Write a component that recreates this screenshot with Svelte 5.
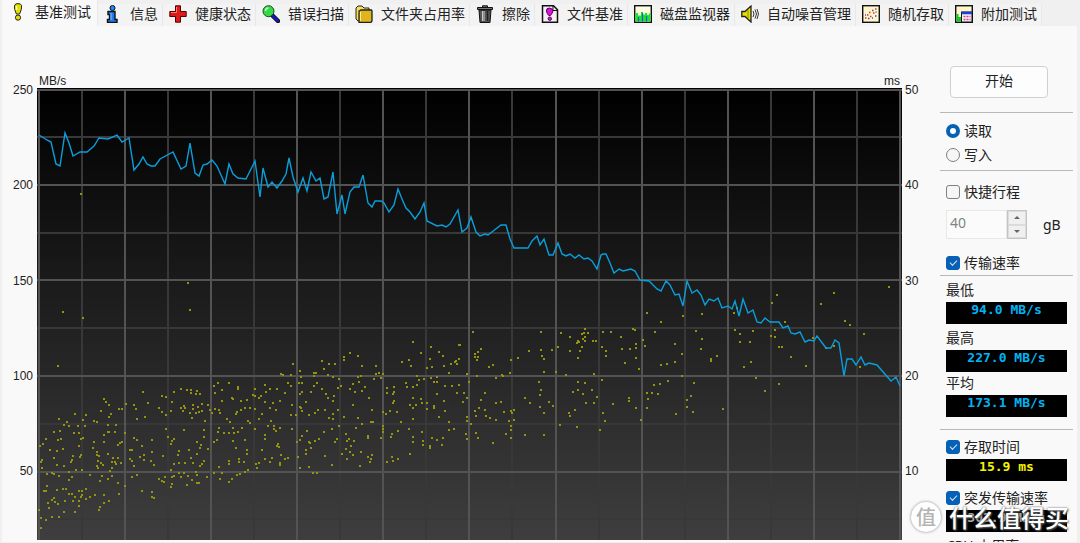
<script lang="ts">
  const tabs = [
    { id: 'bench', label: '基准测试' },
    { id: 'info', label: '信息' },
    { id: 'health', label: '健康状态' },
    { id: 'scan', label: '错误扫描' },
    { id: 'folder', label: '文件夹占用率' },
    { id: 'erase', label: '擦除' },
    { id: 'file', label: '文件基准' },
    { id: 'monitor', label: '磁盘监视器' },
    { id: 'aam', label: '自动噪音管理' },
    { id: 'random', label: '随机存取' },
    { id: 'extra', label: '附加测试' }
  ];

  const speedTicks = [250, 200, 150, 100, 50];
  const timeTicks = [50, 40, 30, 20, 10];
  const majorX = [39, 125, 211, 297, 383, 469, 556, 642, 728, 814, 900];
  const minorX = [82, 168, 254, 340, 426, 512, 599, 685, 771, 857];
  const majorY = [90, 185, 280, 376, 472];
  const minorY = [137, 233, 328, 424, 519];

  // transfer rate curve
  const speedLine =
    '39,135 47,140 51,142 56,164 60,166 65,133 69,143 73,156 80,152 87,152 94,146 99,138 108,139 117,135 122,142 129,138 134,170 139,164 143,157 147,164 151,166 155,166 160,159 173,152 181,169 186,166 190,143 195,173 199,176 203,165 207,164 212,160 217,166 225,184 229,164 233,174 238,178 246,179 255,161 260,197 263,168 268,187 272,182 277,188 282,181 286,174 289,158 293,177 298,192 303,178 307,191 311,172 316,181 320,178 324,199 328,197 333,172 337,214 342,195 345,214 350,192 354,187 359,187 363,175 368,203 372,207 375,201 381,201 384,203 389,212 394,205 398,189 402,199 406,208 410,212 415,219 420,212 424,203 427,221 437,226 442,225 446,227 450,224 458,210 462,232 467,228 471,217 476,232 480,236 485,234 488,235 501,225 506,225 510,239 514,248 528,248 532,241 537,236 540,245 544,239 549,255 553,255 558,243 562,254 566,256 570,254 575,258 579,255 584,259 588,258 592,261 597,269 601,255 603,254 606,254 610,263 614,273 619,269 623,271 631,269 635,271 640,280 649,281 657,289 661,291 666,281 670,285 675,295 679,294 683,306 687,281 692,293 697,290 701,295 705,305 709,299 714,301 718,298 722,308 728,306 732,309 735,301 739,316 743,299 748,313 753,310 757,322 761,323 765,318 770,322 779,322 783,328 788,326 791,333 795,334 800,332 805,342 809,340 814,341 817,336 826,348 831,348 835,340 839,343 844,376 847,359 852,359 856,365 861,357 865,365 869,363 877,365 891,381 896,377 900,386';

  // access time samples
  const accessDots =
    '81,194 188,283 190,310 63,312 83,318 58,366 143,392 162,396 166,397 174,392 181,389 187,390 191,390 191,393 197,391 196,394 200,394 104,399 106,402 109,405 101,411 119,409 122,409 126,404 134,405 136,409 148,403 159,408 172,402 162,412 171,411 181,408 184,406 185,408 183,411 193,405 193,409 198,407 202,404 208,405 210,410 190,413 196,413 199,412 202,411 214,386 218,383 222,390 229,383 215,393 238,387 238,389 222,401 232,398 233,399 215,409 219,410 212,413 220,413 237,412 236,414 ' +
    '75,414 86,415 59,419 83,420 67,422 64,425 69,426 78,426 85,426 94,421 97,422 109,417 111,414 108,425 116,425 137,419 145,417 166,415 192,418 205,421 227,419 230,422 54,432 60,431 74,433 79,433 104,435 108,432 109,432 115,432 125,433 166,429 184,430 204,430 219,428 218,432 224,433 229,433 233,428 234,433 238,432 46,439 43,444 40,446 50,450 58,440 61,439 57,451 63,449 81,439 83,438 79,446 94,442 93,448 104,442 118,445 120,443 122,442 134,438 137,440 152,440 142,446 130,450 132,450 168,437 174,439 172,441 171,444 197,442 204,437 201,445 200,448 189,450 208,449 214,442 217,440 233,441 236,448 ' +
    '54,458 42,460 41,462 42,468 57,465 64,466 73,456 80,457 81,455 72,460 71,462 76,470 82,470 97,452 97,455 99,456 98,461 101,463 97,466 98,468 103,465 108,454 113,458 112,462 118,458 115,462 116,464 121,463 112,468 110,471 130,459 132,461 134,466 140,457 144,455 144,460 152,452 151,461 154,465 163,456 179,451 178,455 174,464 179,463 171,470 185,463 191,458 197,454 204,461 202,464 200,466 193,463 229,461 229,464 239,459 239,462 219,467 52,473 54,474 47,474 59,476 69,472 69,480 72,477 90,475 102,476 100,481 108,479 112,476 118,483 125,486 132,477 137,475 159,479 162,481 164,482 165,477 172,477 174,476 172,484 171,487 179,473 181,477 184,473 188,476 187,485 192,480 196,472 197,475 197,483 199,483 207,477 214,473 222,473 220,479 232,479 229,482 237,475 ' +
    '47,486 44,491 46,491 57,490 63,489 66,489 69,494 72,494 79,491 82,491 86,489 75,497 81,497 82,495 86,499 90,497 95,495 104,495 119,494 142,491 152,492 152,497 154,498 54,498 52,500 55,502 48,503 58,504 49,508 65,501 73,501 79,501 79,506 64,512 75,512 100,507 99,510 104,503 109,501 39,510 41,518 46,520 52,517 59,517 41,528 ' +
    '293,364 281,374 283,375 291,375 300,371 301,377 314,373 316,373 314,376 322,361 324,369 329,364 335,364 328,375 333,377 344,357 344,360 350,353 358,356 362,366 376,366 376,374 379,373 383,374 358,377 361,376 381,378 374,379 359,382 413,342 421,353 431,347 439,352 443,356 430,359 409,360 402,362 411,366 427,368 432,367 444,366 451,364 456,361 457,364 459,359 459,345 449,373 417,376 431,378 437,377 434,382 437,382 424,379 419,380 417,385 406,383 407,387 413,387 445,386 452,386 265,385 288,383 291,386 299,383 302,383 317,383 314,386 322,389 339,379 341,386 338,388 353,384 350,389 355,392 362,391 365,387 387,388 387,393 394,387 394,392 ' +
    '255,389 266,392 270,389 277,389 285,393 300,394 302,392 311,392 326,394 328,398 334,396 333,401 306,402 253,395 255,396 259,398 261,396 247,400 241,401 265,402 273,403 280,401 292,405 300,407 301,408 302,411 325,410 318,410 315,413 309,415 329,418 333,414 333,419 338,410 344,417 353,405 369,398 372,410 358,418 362,424 371,422 373,422 245,408 250,408 241,410 255,409 270,408 276,410 291,415 296,415 262,414 259,419 248,421 250,423 271,421 268,426 255,429 274,426 274,429 276,431 280,428 292,429 242,428 307,431 324,432 332,429 339,426 356,428 346,434 302,436 300,440 297,442 309,442 310,443 315,441 319,439 311,448 306,450 306,454 298,457 325,456 335,442 337,439 347,441 349,439 354,441 351,446 346,449 350,452 342,454 353,455 347,459 361,452 368,436 368,438 381,438 372,455 368,457 371,459 370,462 360,466 332,465 ' +
    '245,440 265,435 265,439 278,444 277,446 279,447 262,450 247,450 247,454 281,455 244,462 265,459 272,458 270,462 280,463 280,465 288,458 285,459 259,463 256,464 257,468 248,470 245,472 300,468 309,467 313,473 317,473 236,448 240,474 237,475 383,412 386,414 390,411 397,412 393,394 394,401 393,403 410,405 413,408 416,405 413,398 421,399 422,403 427,403 427,409 434,406 434,408 437,394 444,401 439,417 445,411 457,393 413,419 401,422 383,426 383,429 383,432 398,431 392,434 391,437 409,429 422,432 413,437 413,442 423,441 423,445 430,446 430,448 432,438 437,440 443,438 442,445 449,430 454,429 449,422 410,454 392,457 393,461 398,459 387,462 ' +
    '473,332 460,345 481,349 478,352 475,354 475,357 478,357 477,360 493,365 489,367 511,360 510,373 518,358 529,351 541,332 541,350 542,356 544,359 552,350 544,372 556,372 558,347 561,333 570,337 570,351 585,329 588,333 582,334 584,333 585,337 583,339 585,341 578,341 579,342 577,343 582,347 580,351 578,358 593,341 596,341 603,332 611,332 602,347 606,351 606,356 621,337 622,349 630,349 633,329 635,330 636,344 636,348 636,358 625,363 639,369 647,313 661,322 655,332 643,340 645,346 594,374 566,375 602,380 502,375 503,376 496,378 477,376 469,382 467,374 464,393 467,398 463,402 485,393 481,400 479,408 475,411 476,416 486,416 485,410 496,403 501,402 504,412 490,418 496,420 509,421 511,411 512,413 514,410 514,420 467,417 467,421 471,424 511,426 511,430 506,434 511,438 493,443 476,433 478,438 466,434 467,439 525,435 544,435 525,398 530,403 539,382 541,390 540,395 549,402 553,406 540,407 544,413 ' +
    '452,386 449,422 449,430 454,429 443,438 442,445 455,362 451,364 457,364 449,373 459,385 457,393 578,382 585,383 578,390 573,392 583,394 592,390 597,397 586,403 594,403 575,410 569,413 570,416 560,425 577,427 600,430 605,421 603,413 613,404 629,398 629,401 636,408 641,420 647,393 652,393 658,394 648,399 647,408 654,385 660,384 683,316 702,314 696,331 702,339 701,349 675,344 682,354 675,362 661,365 667,364 682,376 668,381 694,383 691,396 687,400 687,407 693,412 676,414 723,409 717,356 711,359 711,361 772,303 777,295 785,322 734,313 737,308 735,330 740,334 753,331 740,342 750,342 751,362 744,367 756,378 765,391 771,336 775,330 775,337 779,347 782,347 779,384 791,357 806,366 813,338 821,304 834,293 845,321 850,325 864,334 889,287 826,348 834,346 860,367';

  const dotPath = accessDots
    .split(' ')
    .map((p) => {
      const [x, y] = p.split(',').map(Number);
      return `M${x - 1} ${y - 1}h2v2h-2z`;
    })
    .join('');

  let active = $state('bench');
  let mode = $state('read');
  let shortStroke = $state(false);
  let capacity = $state(40);
  let showTransfer = $state(true);
  let showAccess = $state(true);
  let showBurst = $state(true);
</script>

{#snippet icon(id: string)}
  <svg class="icon" viewBox="0 0 18 18" aria-hidden="true">
    {#if id === 'bench'}
      <path d="M6 2Q6 .6 9 .6T12.600 2.500Q13 6 10.600 11H7.400Q5 6 5.400 3Z" fill="#e6e000" stroke="#222" />
      <path d="M7.500 3v4" stroke="#ffffa8" stroke-width="1.500" />
      <circle cx="9" cy="14.600" r="2.600" fill="#e6e000" stroke="#222" />
    {:else if id === 'info'}
      <circle cx="8.500" cy="3" r="2.500" fill="#1a8cff" stroke="#111" />
      <path d="M4 6.500h7v8h2v3H3.500v-3h2v-5H4Z" fill="#1a7cf0" stroke="#111" stroke-width="1.400" />
      <path d="M7 8v7" stroke="#7cc4ff" />
    {:else if id === 'health'}
      <path d="M6.500.8h5v5.700h5.700v5h-5.700v5.700h-5v-5.700H.8v-5h5.700Z" fill="#dc1c1c" stroke="#500" />
      <path d="M7.500 2v5.500H2" stroke="#ff7b6b" fill="none" />
    {:else if id === 'scan'}
      <path d="M10 10l6 6" stroke="#111" stroke-width="4.500" stroke-linecap="round" />
      <path d="M10.500 10.500l5.300 5.300" stroke="#1418c8" stroke-width="2.500" stroke-linecap="round" />
      <circle cx="6.500" cy="6.200" r="5.500" fill="#34d848" stroke="#164d1a" />
      <path d="M3.500 6q0-3 3-3" stroke="#c4ffc8" stroke-width="1.500" fill="none" />
    {:else if id === 'folder'}
      <path d="M1 3l2-2h4l2 2h5v11l-1 2H3l-2-2Z" fill="#f4e05a" stroke="#222" />
      <path d="M4 6l2-1h10.500l.5 1v10l-1 1.300H4Z" fill="#e0b41c" stroke="#222" stroke-width="1.300" />
      <path d="M5.500 7v9" stroke="#ffee88" />
    {:else if id === 'erase'}
      <path d="M6.500 2V.8h5V2M1.500 2.500h15v2h-15Z" fill="#777" stroke="#111" />
      <path d="M3 5h12l-1 12.500H4Z" fill="#555" stroke="#111" />
      <path d="M6.500 6v10M8 6v10" stroke="#c8c8c8" />
      <path d="M11.500 6v10" stroke="#222" stroke-width="1.500" />
    {:else if id === 'file'}
      <path d="M1.500.8h11l4 4v12.400h-15Z" fill="#f4f0f4" stroke="#111" stroke-width="1.500" />
      <path d="M12 1v4.500h4.500" fill="none" stroke="#111" />
      <path d="M8.500 3Q5 3 5.500 6t2.300 4.500h1.700Q11.500 8 12 6T8.500 3Z" fill="#e010e0" stroke="#505" />
      <circle cx="8.800" cy="13.700" r="1.700" fill="#e010e0" stroke="#505" />
    {:else if id === 'monitor'}
      <rect x=".7" y=".7" width="16.600" height="16.600" fill="#fdfde0" stroke="#111" stroke-width="1.400" />
      <path d="M1.500 16.500V8H4v2.500h3V7h2v2.500h2V8h2v2h2V8.500h1.500v8Z" fill="#18e828" />
      <path d="M4.500 16.500V12M8.500 16.500V8M12.500 16.500V11" stroke="#2458d8" stroke-width="1.300" />
    {:else if id === 'aam'}
      <path d="M.8 6.500H4L10 1v16l-6-5.500H.8Z" fill="#e6e000" stroke="#222" stroke-width="1.300" />
      <path d="M7 5v8" stroke="#888800" />
      <path d="M12 6q2 3 0 6M14 4.500q3 4.500 0 9M16 4q3 5 0 10" fill="none" stroke="#333" />
    {:else if id === 'random'}
      <rect x=".7" y=".7" width="16.600" height="16.600" fill="#fff6cc" stroke="#111" stroke-width="1.400" />
      <path d="M3 13h1.500M5 10h1.500M8 11.500h1.500M7 7.500h1.500M11 8h1.500M13 4h1.500" stroke="#e03030" stroke-width="1.500" />
      <path d="M3 10h1M6 13.500h1.500M10 13h1M10 5.500h1.500M13.500 7h1M13 11h1.500" stroke="#3050e0" stroke-width="1.500" />
    {:else}
      <rect x=".7" y=".7" width="16.600" height="16.600" fill="#fdf6c8" stroke="#111" stroke-width="1.400" />
      <path d="M1.500 16.500V9h2v3H6v4.500Z" fill="#10c820" />
      <rect x="6.500" y="7" width="10.500" height="10" fill="#f4f0ff" stroke="#111" />
      <path d="M6.500 8h10.500" stroke="#1840d8" stroke-width="2.500" />
      <path d="M8.500 11.500h7M8.500 14.500h7" stroke="#e04070" stroke-dasharray="2 1" stroke-width="1.500" />
    {/if}
  </svg>
{/snippet}

<div class="window">
  <nav class="tabs">
    {#each tabs as tab}
      <button type="button" class="tab" class:active={active === tab.id} onclick={() => (active = tab.id)}>
        {@render icon(tab.id)}
        <span>{tab.label}</span>
      </button>
    {/each}
  </nav>

  <main class="panel">
    <div class="axis left">
      {#each speedTicks as tick}
        <span>{tick}</span>
      {/each}
    </div>

    <section class="chart">
      <div class="units"><span>MB/s</span><span>ms</span></div>
      <svg class="plot" viewBox="37 88 865 452" preserveAspectRatio="none" role="img" aria-label="MB/s, ms">
        <defs>
          <linearGradient id="plot-bg" x1="0" y1="0" x2="0" y2="1">
            <stop offset="0" stop-color="#000" />
            <stop offset="1" stop-color="#3e3e3e" />
          </linearGradient>
        </defs>
        <rect x="37" y="88" width="865" height="452" fill="url(#plot-bg)" />
        <g class="minor">
          {#each minorX as x}<line x1={x} x2={x} y1="90" y2="540" />{/each}
          {#each minorY as y}<line x1="37" x2="902" y1={y} y2={y} />{/each}
        </g>
        <g class="major">
          {#each majorX as x}<line x1={x} x2={x} y1="90" y2="540" />{/each}
          {#each majorY as y}<line x1="37" x2="902" y1={y} y2={y} />{/each}
        </g>
        {#if showAccess}<path class="dots" d={dotPath} />{/if}
        {#if showTransfer}<polyline class="speed" points={speedLine} />{/if}
      </svg>
    </section>

    <div class="axis right">
      {#each timeTicks as tick}
        <span>{tick}</span>
      {/each}
    </div>

    <aside class="side">
      <button type="button" class="start">开始</button>

      <div class="group modes">
        <label><input type="radio" name="mode" value="read" bind:group={mode} />读取</label>
        <label><input type="radio" name="mode" value="write" bind:group={mode} />写入</label>
      </div>

      <div class="group stroke">
        <label><input type="checkbox" bind:checked={shortStroke} />快捷行程</label>
        <div class="capacity">
          <div class="spin">
            <input id="capacity" type="text" bind:value={capacity} disabled={!shortStroke} />
            <div class="arrows">
              <button type="button" aria-label="+" onclick={() => capacity++}><i class="up"></i></button>
              <button type="button" aria-label="-" onclick={() => capacity--}><i class="down"></i></button>
            </div>
          </div>
          <label for="capacity">gB</label>
        </div>
        <label><input type="checkbox" bind:checked={showTransfer} />传输速率</label>
      </div>

      <div class="group results">
        <span class="name">最低</span>
        <output class="lcd">94.0 MB/s</output>
        <span class="name">最高</span>
        <output class="lcd">227.0 MB/s</output>
        <span class="name last">平均</span>
        <output class="lcd">173.1 MB/s</output>
      </div>

      <div class="group timing">
        <label><input type="checkbox" bind:checked={showAccess} />存取时间</label>
        <output class="lcd yellow">15.9 ms</output>
        <label class="burst"><input type="checkbox" bind:checked={showBurst} />突发传输速率</label>
        <output class="lcd dim">303.9 MB/s</output>
        <span class="name cpu">CPU 占用率</span>
      </div>
    </aside>
  </main>

  <div class="watermark">
    <span class="badge">值</span>
    <span>什么值得买</span>
  </div>
</div>

<style>
  :global(body) {
    background: #f0f0f0;
  }

  .window {
    position: relative;
    display: flex;
    flex-direction: column;
    box-sizing: border-box;
    height: 100vh;
    padding: 0 3px 1px 2px;
    overflow: hidden;
    font-family: 'Noto Sans', 'Noto Sans CJK SC', sans-serif;
    font-size: 14px;
    color: #222;
  }

  button,
  input {
    font: inherit;
    color: inherit;
  }

  .tabs {
    display: flex;
    flex: none;
    height: 26px;
    align-items: flex-end;
  }

  .tab {
    display: flex;
    flex: none;
    align-items: center;
    gap: 8px;
    height: 22px;
    padding: 0 4px 2px 6px;
    border: 0;
    border-right: 1px solid #e8e8e8;
    background: #f3f3f3;
    line-height: 20px;
    white-space: nowrap;
  }

  .tab.active {
    align-self: flex-start;
    height: 26px;
    padding: 0 6px 2px 7px;
    background: #f9f9f9;
  }

  .icon {
    flex: none;
    width: 18px;
    height: 18px;
  }

  .panel {
    display: grid;
    grid-template-columns: 35px minmax(0, 1fr) 38px 133px;
    flex: 1;
    min-height: 0;
    padding-right: 4px;
    background: #f9f9f9;
  }

  .axis {
    display: grid;
    grid-template-rows: repeat(4, 211fr) 156fr;
    padding: 56px 4px 8px 3px;
    font: 12px/16px 'Liberation Sans', sans-serif;
  }

  .left {
    text-align: right;
  }

  .chart {
    display: flex;
    flex-direction: column;
    min-height: 0;
    padding: 48px 0 2px;
  }

  .units {
    display: flex;
    flex: none;
    justify-content: space-between;
    padding: 0 2px;
    font: 12px/14px 'Liberation Sans', sans-serif;
  }

  .plot {
    display: block;
    flex: 1;
    width: 100%;
    min-height: 0;
  }

  .minor {
    stroke: #383838;
    stroke-width: 2;
  }

  .major {
    stroke: #535353;
    stroke-width: 2;
  }

  .dots {
    fill: #94940e;
  }

  .speed {
    fill: none;
    stroke: #0a9edc;
    stroke-width: 1.4;
  }

  .side {
    display: flex;
    flex-direction: column;
    min-height: 0;
    padding-top: 40px;
    overflow: hidden;
    line-height: 20px;
  }

  .start {
    flex: none;
    width: 98px;
    height: 32px;
    margin: 0 0 14px 10px;
    padding: 0 0 2px;
    border: 1px solid #d0d0d0;
    border-radius: 4px;
    background: #fdfdfd;
  }

  .group {
    display: flex;
    flex: none;
    flex-direction: column;
    border-top: 1px solid #b8b8b8;
    padding: 0 6px;
  }

  .group label {
    display: flex;
    align-items: center;
    gap: 4px;
    height: 20px;
    white-space: nowrap;
  }

  input[type='radio'],
  input[type='checkbox'] {
    display: flex;
    align-items: center;
    justify-content: center;
    appearance: none;
    box-sizing: border-box;
    flex: none;
    width: 14px;
    height: 14px;
    margin: 0;
    border: 1px solid #808080;
    border-radius: 3px;
    background: #f6f6f6;
  }

  input[type='radio'] {
    border-radius: 50%;
  }

  input[type='radio']:checked {
    border: 4px solid #0560b6;
    background: #fff;
  }

  input[type='checkbox']:checked {
    border-color: #0560b6;
    background: #0560b6;
  }

  input[type='checkbox']:checked::after {
    content: '';
    width: 6px;
    height: 3px;
    margin-bottom: 2px;
    border: solid #d6e6f6;
    border-width: 0 0 1px 1px;
    transform: rotate(-45deg);
  }

  .modes {
    gap: 4px;
    padding-top: 8px;
    padding-bottom: 5px;
  }

  .stroke {
    padding-top: 11px;
    padding-bottom: 2px;
  }

  .capacity {
    display: flex;
    align-items: center;
    gap: 16px;
    margin: 8px 0 14px;
  }

  .spin {
    display: flex;
    width: 81px;
    height: 29px;
  }

  .spin input {
    box-sizing: border-box;
    flex: 1;
    min-width: 0;
    padding: 0 3px 3px;
    border: 1px solid #e8e8e8;
    background: #fbfbfb;
    color: #838383;
  }

  .arrows {
    display: flex;
    flex-direction: column;
    box-sizing: border-box;
    width: 20px;
    border: 1px solid #c4c4c8;
    background: #f0f0f0;
  }

  .arrows button {
    display: flex;
    flex: 1;
    align-items: center;
    justify-content: center;
    padding: 0;
    border: 1px solid #dcdcdc;
    background: #f0f0f0;
  }

  .up,
  .down {
    border: 3px solid transparent;
  }

  .up {
    border-top: 0;
    border-bottom-color: #666;
  }

  .down {
    border-bottom: 0;
    border-top-color: #666;
  }

  .name {
    height: 20px;
    margin-top: 4px;
  }

  .name.last {
    margin-top: 1px;
  }

  .results {
    padding-bottom: 12px;
  }

  .lcd {
    display: block;
    box-sizing: border-box;
    height: 22px;
    margin-top: 2px;
    background: #000;
    color: #00b4f4;
    font: bold 13px/16px 'DejaVu Sans Mono', monospace;
    text-align: center;
    white-space: pre;
  }

  .lcd.yellow {
    color: #f4f400;
  }

  .lcd.dim {
    color: #a8a8a8;
  }

  .timing {
    padding-top: 7px;
  }

  .timing .burst {
    margin-top: 7px;
  }

  .watermark {
    position: absolute;
    right: 11px;
    bottom: 10px;
    display: flex;
    align-items: center;
    gap: 8px;
    font: 500 24px/32px 'Noto Sans CJK SC', sans-serif;
    color: #fff;
    text-shadow: 0 0 2px #555, 1px 1px 2px #666;
    pointer-events: none;
  }

  .badge {
    width: 30px;
    height: 30px;
    border-radius: 50%;
    background: #fff;
    box-shadow: 0 0 3px #888;
    color: #b4b4b4;
    font-size: 20px;
    line-height: 29px;
    text-align: center;
    text-shadow: none;
  }
</style>
